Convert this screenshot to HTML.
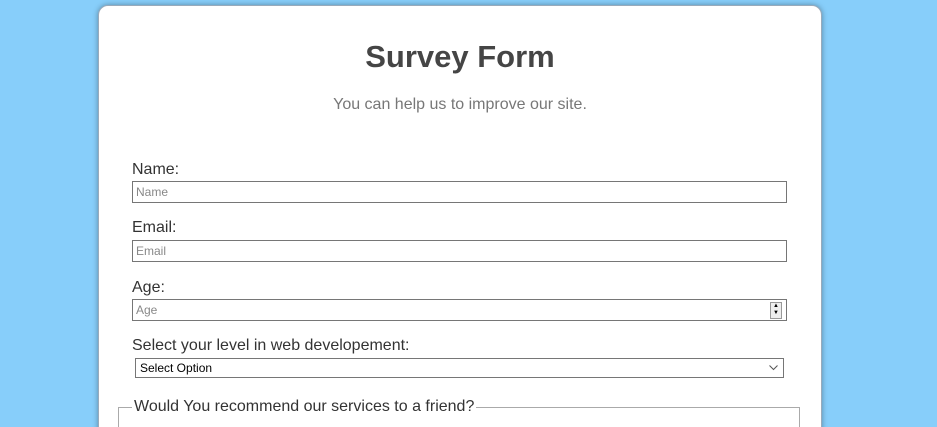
<!DOCTYPE html>
<html><head><style>
html,body{margin:0;padding:0;width:937px;height:427px;overflow:hidden;}
body{background:#87cefa;font-family:"Liberation Sans",sans-serif;position:relative;}
.card{position:absolute;left:98px;top:5px;width:722px;height:480px;background:#fff;border:1px solid #9ab;border-radius:10px;box-shadow:0 0 6px rgba(0,0,0,.35);}
h1{position:absolute;left:0;right:0;top:33px;margin:0;text-align:center;font-size:31px;font-weight:bold;color:#454545;line-height:36px;}
.sub{position:absolute;left:0;right:0;top:90px;text-align:center;font-size:16px;color:#777;}
.lbl{position:absolute;left:33px;font-size:16px;color:#333;line-height:18px;}
.inp{position:absolute;left:33px;width:650px;height:20px;border:1px solid #767676;font-size:12px;color:#888;line-height:20px;padding-left:3px;box-sizing:content-box;}
.sel{position:absolute;left:36px;width:643px;height:18px;border:1px solid #767676;font-size:12px;color:#000;line-height:18px;padding-left:4px;}
.spin{position:absolute;right:4px;top:2px;width:10px;height:15px;border:1px solid #999;background:#eee;font-size:6px;line-height:7px;text-align:center;color:#000;}
fieldset{position:absolute;left:19px;top:392px;width:680px;height:60px;border:1px solid #aaa;margin:0;padding:0;}
legend{font-size:16px;color:#333;margin-left:13px;padding:0 2px;}
</style></head><body>
<div class="card">
<h1>Survey Form</h1>
<div class="sub">You can help us to improve our site.</div>
<div class="lbl" style="top:155px">Name:</div>
<div class="inp" style="top:175px">Name</div>
<div class="lbl" style="top:213px">Email:</div>
<div class="inp" style="top:234px">Email</div>
<div class="lbl" style="top:273px">Age:</div>
<div class="inp" style="top:293px">Age<div class="spin">▲<br>▼</div></div>
<div class="lbl" style="top:331px">Select your level in web developement:</div>
<div class="sel" style="top:352px">Select Option<svg style="position:absolute;right:5px;top:6px" width="9" height="6" viewBox="0 0 9 6"><path d="M0.5 0.5L4.5 4.5L8.5 0.5" fill="none" stroke="#555"/></svg></div>
<fieldset><legend>Would You recommend our services to a friend?</legend></fieldset>
</div>
</body></html>
